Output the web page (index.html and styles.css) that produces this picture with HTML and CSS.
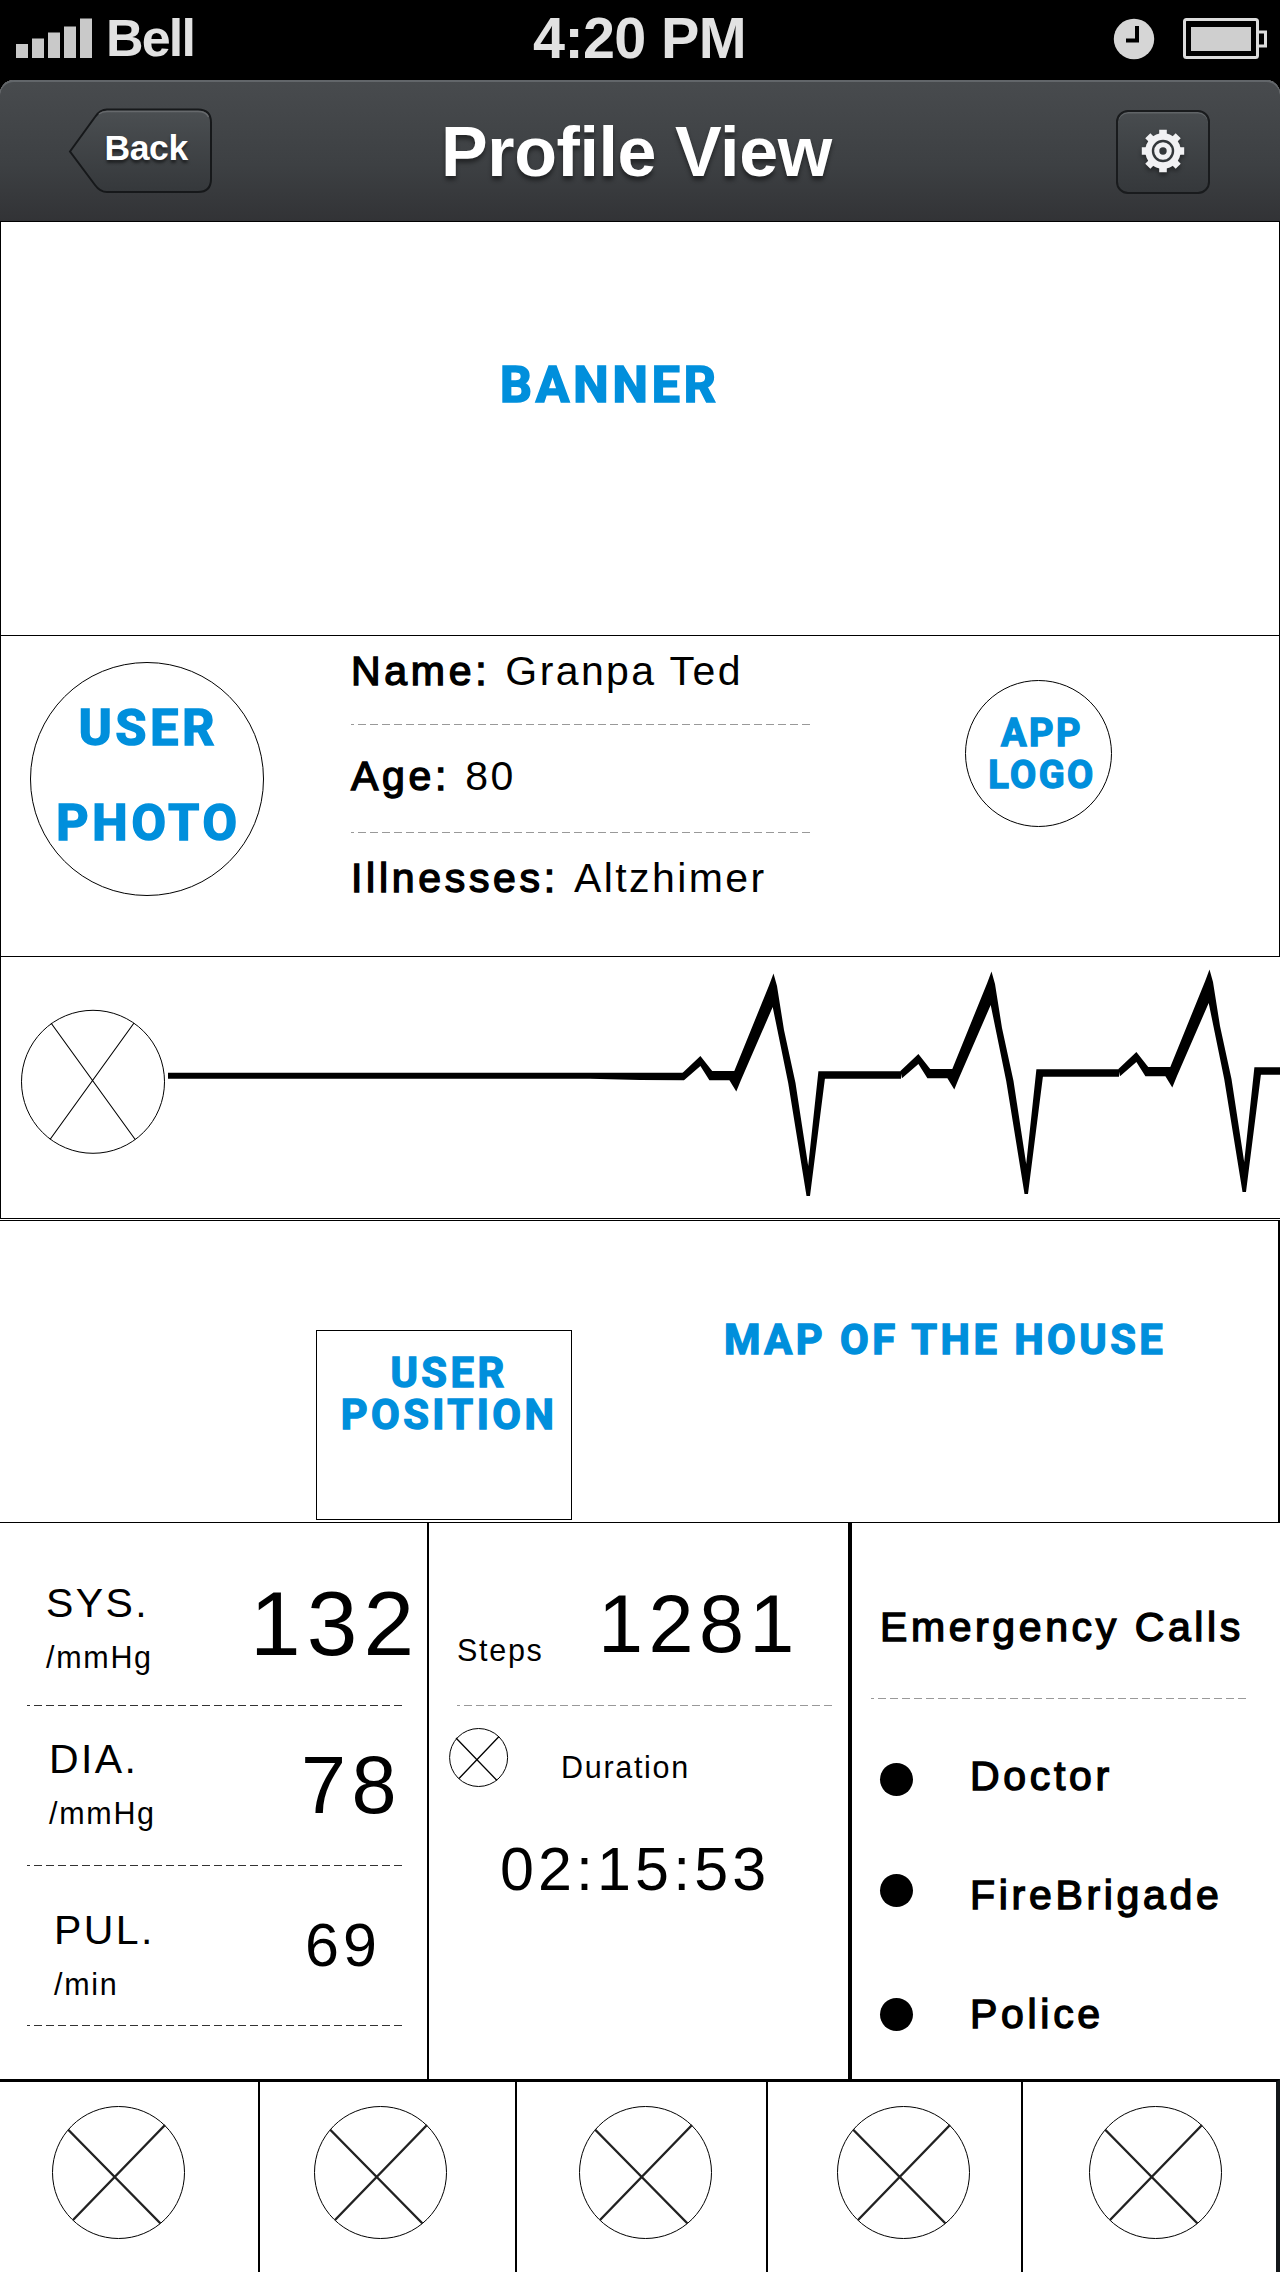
FILE: index.html
```html
<!DOCTYPE html>
<html lang="en">
<head>
<meta charset="utf-8">
<title>Profile View</title>
<link rel="stylesheet" href="styles.css">
</head>
<body>
<svg class="defs" aria-hidden="true">
  <symbol id="slot" viewBox="0 0 134 134">
    <circle cx="66.5" cy="66.5" r="66" fill="none" stroke="#000"/>
    <path d="M16 23.5 108.5 117.5M113 19 21 114" fill="none" stroke="#222" stroke-width="2.4"/>
  </symbol>
</svg>
<div class="screen">
  <div class="status">
    <div class="carrier">
      <svg width="78" height="42" viewBox="0 0 78 42" fill="#c9c9c9"><path d="M0 26h12v14H0zM16 20.500h12V40H16zM32 14.500h12V40H32zM48 8.500h12V40H48zM64 .5h12V40H64z"/></svg>
      <span class="carrier-name">Bell</span>
    </div>
    <div class="clock">4:20 PM</div>
    <svg class="alarm" width="42" height="42" viewBox="0 0 42 42"><circle cx="21" cy="21" r="20.200" fill="#d6d6d6"/><path d="M24 8v14.500H13" fill="none" stroke="#000" stroke-width="4"/></svg>
    <svg class="battery" width="86" height="42" viewBox="0 0 86 42"><rect x="1.500" y="1.500" width="73" height="38" rx="2" fill="none" stroke="#dcdcdc" stroke-width="3"/><rect x="8" y="9" width="60" height="24" fill="#cfcfcf"/><path d="M75 14h7.500v14H75" fill="none" stroke="#dcdcdc" stroke-width="3"/></svg>
  </div>

  <header class="nav">
    <a class="back">
      <svg class="back-shape" width="146" height="86" viewBox="0 0 146 86">
        <defs><linearGradient id="btn" x1="0" y1="0" x2="0" y2="1"><stop offset="0" stop-color="#4b4f52"/><stop offset="1" stop-color="#35383b"/></linearGradient></defs>
        <path d="M2 43.500 27 9Q32 1.500 39 1.500H130Q143 1.500 143 14.500V71Q143 84 130 84H39Q32 84 27 77Z" fill="url(#btn)" stroke="#16181a" stroke-width="2"/>
        <path d="M31 6Q34 3.500 39 3.500H130Q138 3.500 140.500 9" fill="none" stroke="#66696c" stroke-width="1.500"/>
      </svg>
      <span class="back-label">Back</span>
    </a>
    <h1 class="title">Profile View</h1>
    <a class="settings">
      <svg width="46" height="46" viewBox="-23 -23 46 46">
        <g fill="#f1f1f3">
          <circle r="17.800"/>
          <path d="M-3.800-21.200H3.800V21.200H-3.800ZM-21.200-3.800V3.800H21.200V-3.800Z"/>
          <path transform="rotate(45)" d="M-3.600-21.500H3.600V21.500H-3.600ZM-21.500-3.600V3.600H21.500V-3.600Z"/>
        </g>
        <circle r="10" fill="none" stroke="#33373a" stroke-width="2.400"/>
        <circle r="3.700" fill="#33373a"/>
      </svg>
    </a>
  </header>

  <section class="banner"><span class="tag tag-lg">BANNER</span></section>

  <section class="profile">
    <div class="photo"><span class="tag tag-lg">USER</span><span class="tag tag-lg">PHOTO</span></div>
    <div class="info">
      <p class="fact"><span class="strong">Name: </span>Granpa Ted</p>
      <div class="rule"></div>
      <p class="fact fact-age"><span class="strong">Age: </span>80</p>
      <div class="rule"></div>
      <p class="fact fact-ill"><span class="strong">Illnesses: </span>Altzhimer</p>
    </div>
    <div class="logo"><span class="tag tag-sm">APP</span><span class="tag tag-sm">LOGO</span></div>
  </section>

  <section class="pulse">
    <svg width="1279" height="261" viewBox="1 957 1279 261">
      <circle cx="93" cy="1081.800" r="71.500" fill="none" stroke="#000"/>
      <path d="M51 1023 135.200 1139.500M134 1023 50 1139.500" stroke="#000" stroke-width="1.100" fill="none"/>
      <path d="M168 1072.700H684V1080.200L640 1080 590 1078.800H168Z"/>
      <path id="beat" d="M682.400 1073 700.400 1056 712.200 1071H734.300L769 985.500 773.500 973.500 777 986 784 1030 795.500 1083 808.200 1166 818.400 1071.300H901V1078.700H824.900L810 1196H806.500L788.200 1083 772.700 1007 741 1080 736.300 1091.500 729.400 1080.300H709.400L700.400 1066 684 1080.300Z"/>
      <use href="#beat" x="218" y="-2"/>
      <use href="#beat" x="436" y="-4"/>
    </svg>
  </section>

  <section class="map">
    <div class="position"><span class="tag tag-md">USER</span><span class="tag tag-md">POSITION</span></div>
    <span class="tag tag-md map-label">MAP OF THE HOUSE</span>
  </section>

  <section class="stats">
    <div class="vitals">
      <div class="vital vital-sys">
        <div class="vital-label"><p class="name">SYS.</p><p class="unit">/mmHg</p></div>
        <p class="num num-xl">132</p>
      </div>
      <div class="rule rule-dark"></div>
      <div class="vital vital-dia">
        <div class="vital-label"><p class="name">DIA.</p><p class="unit">/mmHg</p></div>
        <p class="num num-lg">78</p>
      </div>
      <div class="rule rule-dark"></div>
      <div class="vital vital-pul">
        <div class="vital-label"><p class="name">PUL.</p><p class="unit">/min</p></div>
        <p class="num num-md">69</p>
      </div>
      <div class="rule rule-dark"></div>
    </div>
    <div class="activity">
      <div class="steps"><p class="unit">Steps</p><p class="num num-lg">1281</p></div>
      <div class="rule"></div>
      <div class="duration">
        <svg width="60" height="60" viewBox="0 0 60 60" fill="none" stroke="#000"><circle cx="29.600" cy="29.500" r="29"/><path stroke-width="1.300" d="M7 10 48 52.500M50 8.500 10 50.500"/></svg>
        <p class="unit">Duration</p>
      </div>
      <p class="num num-md time">02:15:53</p>
    </div>
    <div class="calls">
      <h2 class="calls-title strong">Emergency Calls</h2>
      <div class="rule"></div>
      <ul class="call-list">
        <li><i class="dot"></i><span class="strong">Doctor</span></li>
        <li><i class="dot"></i><span class="strong">FireBrigade</span></li>
        <li><i class="dot"></i><span class="strong">Police</span></li>
      </ul>
    </div>
  </section>

  <nav class="tabs">
    <a class="tab"><svg class="slot"><use href="#slot"/></svg></a>
    <a class="tab"><svg class="slot"><use href="#slot"/></svg></a>
    <a class="tab"><svg class="slot"><use href="#slot"/></svg></a>
    <a class="tab"><svg class="slot"><use href="#slot"/></svg></a>
    <a class="tab"><svg class="slot"><use href="#slot"/></svg></a>
  </nav>
</div>
</body>
</html>
```
FILE: styles.css
```css
* { box-sizing: border-box; margin: 0; padding: 0; }
body { background: #fff; }
.defs { display: none; }
svg { display: block; flex: none; }

.screen {
  width: 1280px;
  height: 2272px;
  overflow: hidden;
  display: flex;
  flex-direction: column;
  font: 41px/42px "Liberation Sans", Arial, sans-serif;
  letter-spacing: 2.4px;
  color: #000;
  white-space: nowrap;
}
.screen > * { flex: none; }

/* status bar */
.status {
  height: 80px;
  background: #000;
  display: grid;
  grid-template-columns: 533px 580px 70px 97px;
  align-items: start;
  padding-top: 18px;
  color: #e2e2e2;
  font-weight: bold;
  letter-spacing: 0;
}
.carrier { display: flex; padding-left: 16px; gap: 12px; }
.carrier-name { font-size: 52px; line-height: 52px; margin-top: -6px; letter-spacing: -1.800px; }
.clock { font-size: 57.500px; line-height: 58px; margin-top: -9px; letter-spacing: -.6px; }

/* navigation bar */
.nav {
  height: 142px;
  display: flex;
  align-items: flex-start;
  border-radius: 14px 14px 0 0;
  border-bottom: 1px solid #000;
  background: linear-gradient(#484b4e, #3d4043 60%, #323336);
  box-shadow: inset 0 2px 0 #62666a, 0 -14px 0 #000;
  color: #fff;
  font-weight: bold;
  letter-spacing: 0;
}
.back { display: grid; margin: 28px 0 0 68px; width: 146px; }
.back > * { grid-area: 1 / 1; }
.back-label { font-size: 35.500px; line-height: 36px; letter-spacing: -.4px; padding: 22px 0 0 36.500px; text-shadow: 0 3px 3px rgba(0,0,0,.5); }
.title { width: 902px; padding: 37px 0 0 227px; font-size: 70px; line-height: 70px; letter-spacing: -.4px; text-shadow: 0 4px 4px rgba(0,0,0,.45); }
.settings {
  width: 94px;
  height: 84px;
  margin-top: 30px;
  padding-bottom: 2px;
  display: flex;
  align-items: center;
  justify-content: center;
  border: 2px solid #191b1d;
  border-radius: 12px;
  background: linear-gradient(#484c4f, #35383b);
  box-shadow: inset 0 1.500px 0 #606467;
}
.settings svg { filter: drop-shadow(0 3px 2px rgba(0,0,0,.4)); }

/* placeholder captions */
.tag { font-family: Roboto, sans-serif; font-weight: 700; color: #008fdc; letter-spacing: .078em; -webkit-text-stroke: 1.700px #008fdc; }
.tag-lg { font-size: 50px; line-height: 50px; }
.tag-md { font-size: 41.700px; line-height: 42px; letter-spacing: .083em; -webkit-text-stroke-width: 1.400px; }
.tag-sm { font-size: 38px; line-height: 42px; letter-spacing: .065em; -webkit-text-stroke-width: 1.400px; }

.banner { height: 414px; padding: 138px 0 0 499px; border: 1px solid #000; border-top: 0; display: flex; }

/* profile */
.profile { height: 321px; display: flex; align-items: flex-start; border: 1px solid #000; border-top: 0; }
.photo {
  width: 234px;
  height: 234px;
  margin: 26px 0 0 29px;
  padding: 40px 0 0 3px;
  border: 1px solid #000;
  border-radius: 50%;
  display: flex;
  flex-direction: column;
  align-items: center;
  gap: 45px;
}
.info { width: 462px; margin-left: 87px; }
.fact { height: 88px; padding-top: 13.500px; }
.fact-age { height: 107px; padding-top: 30px; }
.fact-ill { padding-top: 24px; }
.strong { font-weight: 400; font-size: 41px; letter-spacing: 3.700px; -webkit-text-stroke: 1.400px #000; white-space: pre; }
.logo {
  width: 147px;
  height: 147px;
  margin: 44px 0 0 152px;
  padding: 31px 0 0 7px;
  border: 1px solid #000;
  border-radius: 50%;
  display: flex;
  flex-direction: column;
  align-items: center;
}
.rule { height: 1px; background: repeating-linear-gradient(90deg, #999 0 3px, transparent 3px 7px, #999 7px 12px); }
.rule-dark { background: repeating-linear-gradient(90deg, #333 0 3px, transparent 3px 7px, #333 7px 12px); }

/* heartbeat */
.pulse { height: 262px; border-left: 1px solid #000; border-bottom: 1px solid #000; }

/* house map */
.map { height: 303px; margin-top: 1px; display: flex; align-items: flex-start; border: 1px solid #000; border-left: 0; border-right-width: 2px; }
.position {
  width: 256px;
  height: 190px;
  margin: 109px 0 0 316px;
  padding: 21px 0 0 10px;
  border: 1px solid #000;
  display: flex;
  flex-direction: column;
  align-items: center;
}
.map-label { margin: 98px 0 0 152px; }

/* measurements */
.stats { height: 556px; display: grid; grid-template: 556px / 429px 423px 428px; }
.stats > * { min-height: 0; overflow: hidden; }
.vitals { border-right: 2px solid #000; }
.vital { display: flex; height: 159px; }
.vital-sys { height: 182px; padding-left: 46px; }
.vital-dia { padding-left: 49px; }
.vital-pul { padding-left: 54px; }
.vital-label { width: 204px; padding-top: 59px; }
.vital-dia .vital-label { width: 252px; padding-top: 32px; }
.vital-pul .vital-label { width: 251px; padding-top: 43px; }
.vitals .rule { margin: 0 22px 0 27px; }
.unit { font-size: 30.500px; line-height: 31px; letter-spacing: 1.700px; }
.vital .unit { margin-top: 18px; }
.num-xl { font-size: 91px; line-height: 93px; letter-spacing: 6.200px; padding-top: 54px; }
.num-lg { font-size: 81px; line-height: 83px; letter-spacing: 5.400px; padding-top: 38px; }
.num-md { font-size: 61px; line-height: 62px; letter-spacing: 4.100px; }
.vital .num-md { padding-top: 48px; }

.activity { border-right: 4px solid #000; }
.steps { display: flex; height: 182px; padding-left: 28px; }
.steps .unit { width: 141px; padding-top: 112px; }
.steps .num { padding-top: 60px; }
.activity .rule { margin: 0 13px 0 28px; }
.duration { display: flex; padding: 22px 0 0 20px; gap: 52px; }
.duration .unit { padding-top: 24px; }
.time { padding: 50px 0 0 71px; }

.calls-title { height: 175px; padding: 83px 0 0 28px; letter-spacing: 3.600px; }
.calls .rule { margin: 0 31px 0 19px; }
.call-list { list-style: none; padding: 56px 0 0 28px; }
.call-list li { display: flex; align-items: flex-start; gap: 57px; height: 119px; }
.dot { width: 33px; height: 33px; margin-top: 8px; border-radius: 50%; background: #000; }
li:nth-child(2) .dot { margin-top: 0; }
li:nth-child(3) .dot { margin-top: 5px; }

/* tab bar */
.tabs { height: 193px; border-top: 3px solid #000; border-right: 4px solid #14181a; display: grid; grid-template-columns: 260px 257px 251px 255px 1fr; }
.tab { border-right: 2px solid #000; padding: 24px 0 0 52px; }
.tab:nth-child(2) { padding-left: 54px; }
.tab:nth-child(3) { padding-left: 62px; }
.tab:nth-child(4) { padding-left: 69px; }
.tab:nth-child(5) { padding-left: 66px; border-right: 0; }
.slot { width: 134px; height: 134px; }
```
